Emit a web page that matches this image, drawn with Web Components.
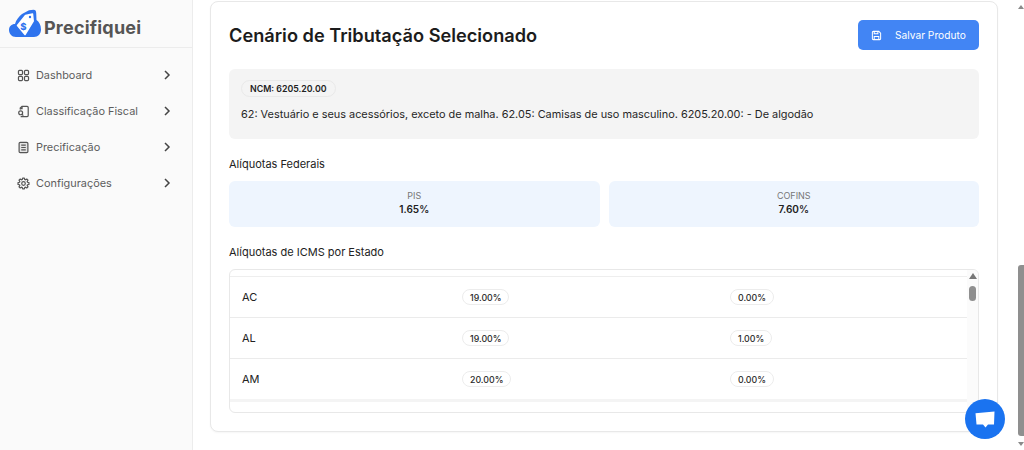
<!DOCTYPE html>
<html lang="pt-BR">
<head>
<meta charset="utf-8">
<title>Precifiquei</title>
<style>
    html, body { margin: 0; height: 100%; background: #fff; overflow: hidden; }
    body { font-family: Inter, "Open Sans", sans-serif; color: #1f1f1f; }
</style>
</head>
<body>
<app-shell>
    <side-bar slot="side">
        <nav-item label="Dashboard" icon="grid"></nav-item>
        <nav-item label="Classificação Fiscal" icon="doc"></nav-item>
        <nav-item label="Precificação" icon="list"></nav-item>
        <nav-item label="Configurações" icon="gear"></nav-item>
    </side-bar>
    <scenario-card>
        <ncm-box code="NCM: 6205.20.00">62: Vestuário e seus acessórios, exceto de malha. 62.05: Camisas de uso masculino. 6205.20.00: - De algodão</ncm-box>
        <section-label>Alíquotas Federais</section-label>
        <rate-tiles>
            <rate-tile name="PIS" value="1.65%"></rate-tile>
            <rate-tile name="COFINS" value="7.60%"></rate-tile>
        </rate-tiles>
        <section-label class="icms">Alíquotas de ICMS por Estado</section-label>
        <icms-table>
            <icms-row uf="AC" a="19.00%" b="0.00%"></icms-row>
            <icms-row uf="AL" a="19.00%" b="1.00%"></icms-row>
            <icms-row uf="AM" a="20.00%" b="0.00%"></icms-row>
        </icms-table>
    </scenario-card>
</app-shell>
<chat-button></chat-button>

<script>
// 8 tooth cog outline around the middle of a 16x16 box
function cogPath() {
    const pts = [];
    for (let i = 0; i < 8; i++) {
        const a = i * Math.PI / 4;
        [[-0.3, 5.1], [-0.16, 6.8], [0.16, 6.8], [0.3, 5.1]].forEach(([d, r]) => {
            pts.push((8 + r * Math.cos(a + d)).toFixed(2) + ' ' + (8 + r * Math.sin(a + d)).toFixed(2));
        });
    }
    return 'M' + pts.join('L') + 'Z';
}

const ICONS = {
    grid: '<rect x="1.800" y="1.800" width="5" height="5" rx="1.200"/><rect x="9.200" y="1.800" width="5" height="5" rx="1.200"/><rect x="1.800" y="9.200" width="5" height="5" rx="1.200"/><rect x="9.200" y="9.200" width="5" height="5" rx="1.200"/>',
    doc: '<path d="M4 5.500V3.800L6.200 1.800H12.500A1.300 1.300 0 0 1 13.800 3.100V12.900A1.300 1.300 0 0 1 12.500 14.200H4.500"/><path d="M6.200 1.800V4.400H4"/><circle cx="4.500" cy="9.600" r="2.400"/><path d="M6.200 11.400 7.800 13"/>',
    list: '<rect x="2.600" y="1.600" width="10.800" height="12.800" rx="1.400" fill="#e4e4e4"/><path d="M5.200 5h5.600M5.200 8h5.600M5.200 11h5.600"/>',
    gear: '<path d="' + cogPath() + '" stroke-linejoin="round"/><circle cx="8" cy="8" r="2.200"/>'
};

class AppShell extends HTMLElement {
    constructor() {
        super();
        this.attachShadow({ mode: 'open' });
        this.shadowRoot.innerHTML = `
            <style>
                :host { display: flex; height: 450px; width: 1024px; }
                .main { flex: 1; min-width: 0; padding: 1px 18px 0 17px; box-sizing: border-box; }
                .bar { width: 8px; flex: none; display: flex; flex-direction: column; }
                .up, .down { width: 0; height: 0; margin-left: 2px; border-left: 3px solid transparent; border-right: 3px solid transparent; }
                .up { border-bottom: 4px solid #8a8a8a; margin-top: 5px; }
                .down { border-top: 4px solid #8a8a8a; margin-top: 6px; }
                .thumb { width: 6px; height: 171px; margin: 256px 0 0 2px; background: #8f8f8f; border-radius: 3px 0 0 3px; }
            </style>
            <slot name="side"></slot>
            <div class="main"><slot></slot></div>
            <div class="bar"><div class="up"></div><div class="thumb"></div><div class="down"></div></div>
        `;
    }
}

class SideBar extends HTMLElement {
    constructor() {
        super();
        this.attachShadow({ mode: 'open' });
        this.shadowRoot.innerHTML = `
            <style>
                :host {
                    display: block; width: 193px; flex: none; box-sizing: border-box;
                    background: #fafafa; border-right: 1px solid #ececec;
                }
                .brand {
                    height: 48px; box-sizing: border-box; border-bottom: 1px solid #ececec;
                    display: flex; align-items: flex-end; gap: 3px; padding: 0 0 9px 8px;
                }
                .brand span { font-size: 18px; line-height: 20px; font-weight: 700; color: #555; letter-spacing: .2px; }
                svg { display: block; flex: none; }
                nav { padding-top: 9px; display: flex; flex-direction: column; }
            </style>
            <div class="brand">
                <svg width="33" height="28" viewBox="0 0 33 28" style="margin-bottom:1px">
                    <path fill="#2f74ee" d="M8 28C3.500 28 1 24.500 1 21 1 17.500 3.500 15 7 15 8 11 11 7.500 14 5L21 1.200 25.500.8C27.500.8 28 2 28.200 4L28.500 11C31 12.500 33 16 33 20.500 33 25 30 28 26 28Z"/>
                    <path fill="#fff" d="M9.500 16.500 17.500 6.500 24.500 5 25.200 12 17 25.500Z" stroke="#fff" stroke-width="1.500" stroke-linejoin="round"/>
                    <circle cx="22" cy="8" r="1.200" fill="#2f74ee"/>
                    <text x="15.500" y="21" font-family="Inter, sans-serif" font-size="9.500" font-weight="800" fill="#2f74ee" text-anchor="middle">$</text>
                </svg>
                <span>Precifiquei</span>
            </div>
            <nav><slot></slot></nav>
        `;
    }
}

class NavItem extends HTMLElement {
    constructor() {
        super();
        this.attachShadow({ mode: 'open' });
    }
    connectedCallback() {
        const icon = ICONS[this.getAttribute('icon')] || '';
        this.shadowRoot.innerHTML = `
            <style>
                :host {
                    display: flex; align-items: center; height: 36px; padding: 0 21px 0 17px;
                    font-size: 10.900px; color: #5d5d5d;
                }
                .ico { fill: none; stroke: #555; stroke-width: 1.500; margin-right: 6px; flex: none; }
                .label { flex: 1; white-space: nowrap; }
                .chev { fill: none; stroke: #444; stroke-width: 1.500; flex: none; }
            </style>
            <svg class="ico" width="13" height="13" viewBox="0 0 16 16">${icon}</svg>
            <span class="label">${this.getAttribute('label')}</span>
            <svg class="chev" width="8" height="10" viewBox="0 0 8 10"><path d="M2 1l4 4-4 4"/></svg>
        `;
    }
}

class ScenarioCard extends HTMLElement {
    constructor() {
        super();
        this.attachShadow({ mode: 'open' });
        this.shadowRoot.innerHTML = `
            <style>
                :host {
                    display: block; box-sizing: border-box; height: 431px; padding: 18px 18px 0;
                    background: #fff; border: 1px solid #e8e8e8; border-radius: 8px;
                    box-shadow: 0 1px 2px rgba(0,0,0,.04);
                }
                .head { display: flex; justify-content: space-between; align-items: center; height: 30px; margin-bottom: 19px; }
                h2 { margin: 0 0 1px; font-size: 18.200px; font-weight: 600; color: #1c1c1c; }
                button {
                    display: flex; align-items: center; width: 121px; height: 30px; padding: 0 0 0 13px;
                    background: #4285f4; border: 0; border-radius: 5px; color: #fff;
                    font: 400 10.200px Inter, sans-serif; box-sizing: border-box; white-space: nowrap;
                }
                button svg { fill: none; stroke: #fff; stroke-width: 1.100; margin-right: 13px; flex: none; }
            </style>
            <div class="head">
                <h2>Cenário de Tributação Selecionado</h2>
                <button>
                    <svg width="11" height="11" viewBox="0 0 12 12"><path d="M1.500 2.500a1 1 0 0 1 1-1h6l2 2v6a1 1 0 0 1-1 1h-7a1 1 0 0 1-1-1z"/><path d="M3.500 1.500v2.500h4v-2.500M3.500 10.500V7h5v3.500"/></svg>
                    Salvar Produto
                </button>
            </div>
            <slot></slot>
        `;
    }
}

class NcmBox extends HTMLElement {
    constructor() {
        super();
        this.attachShadow({ mode: 'open' });
    }
    connectedCallback() {
        this.shadowRoot.innerHTML = `
            <style>
                :host {
                    display: block; box-sizing: border-box; height: 70px; padding: 11px 12px 0;
                    background: #f4f4f4; border-radius: 6px; font-size: 10.900px; color: #262626;
                }
                .tag {
                    display: inline-flex; align-items: center; height: 17px; padding: 0 8px; box-sizing: border-box;
                    border: 1px solid #e9e9e9; border-radius: 9px; font-size: 8.800px; font-weight: 600; color: #222;
                }
                p { margin: 9px 0 0; line-height: 16px; white-space: nowrap; }
            </style>
            <span class="tag">${this.getAttribute('code')}</span>
            <p><slot></slot></p>
        `;
    }
}

class SectionLabel extends HTMLElement {
    constructor() {
        super();
        this.attachShadow({ mode: 'open' });
        this.shadowRoot.innerHTML = `
            <style>
                :host {
                    display: block; margin-top: 17px; height: 16px; line-height: 16px;
                    font-size: 11px; font-weight: 400; color: #222;
                }
            </style>
            <slot></slot>
        `;
    }
}

class RateTiles extends HTMLElement {
    constructor() {
        super();
        this.attachShadow({ mode: 'open' });
        this.shadowRoot.innerHTML = `
            <style>:host { display: grid; grid-template-columns: 1fr 1fr; gap: 9px; margin-top: 9px; }</style>
            <slot></slot>
        `;
    }
}

class RateTile extends HTMLElement {
    constructor() {
        super();
        this.attachShadow({ mode: 'open' });
    }
    connectedCallback() {
        this.shadowRoot.innerHTML = `
            <style>
                :host {
                    display: flex; flex-direction: column; align-items: center; justify-content: center;
                    height: 46px; box-sizing: border-box; padding-bottom: 2px; background: #eef5fe; border-radius: 6px;
                }
                .n { font-size: 9px; line-height: 13px; color: #777; }
                .v { font-size: 10px; line-height: 15px; font-weight: 600; color: #222; }
            </style>
            <span class="n">${this.getAttribute('name')}</span>
            <span class="v">${this.getAttribute('value')}</span>
        `;
    }
}

class IcmsTable extends HTMLElement {
    constructor() {
        super();
        this.attachShadow({ mode: 'open' });
        this.shadowRoot.innerHTML = `
            <style>
                :host {
                    display: flex; box-sizing: border-box; height: 144px; margin-top: 9px;
                    border: 1px solid #e8e8e8; border-radius: 6px; overflow: hidden;
                }
                .rows { flex: 1; min-width: 0; padding-top: 6px; }
                .rows::before { content: ""; display: block; border-top: 1px solid #eee; }
                .rows::after { content: ""; display: block; border-top: 3px solid #f4f4f4; margin-top: -1px; }
                .bar { width: 11px; flex: none; background: #fbfbfb; display: flex; flex-direction: column; align-items: center; }
                .up { width: 0; height: 0; margin-top: 3px; border-left: 4px solid transparent; border-right: 4px solid transparent; border-bottom: 6px solid #777; }
                .thumb { width: 7px; height: 15px; margin-top: 7px; background: #8f8f8f; border-radius: 4px; }
            </style>
            <div class="rows"><slot></slot></div>
            <div class="bar"><div class="up"></div><div class="thumb"></div></div>
        `;
    }
}

class IcmsRow extends HTMLElement {
    constructor() {
        super();
        this.attachShadow({ mode: 'open' });
    }
    connectedCallback() {
        this.shadowRoot.innerHTML = `
            <style>
                :host {
                    display: grid; grid-template-columns: 220px 268px 1fr; align-items: center;
                    height: 41px; box-sizing: border-box; padding-left: 12px;
                    border-bottom: 1px solid #ebebeb; font-size: 11px; font-weight: 400; color: #222;
                }
                .pill {
                    justify-self: start; display: inline-flex; align-items: center; height: 16px; box-sizing: border-box;
                    padding: 0 7px; border: 1px solid #ececec; border-radius: 8px;
                    font-size: 8.800px; font-weight: 500; color: #2a2a2a;
                }
            </style>
            <span>${this.getAttribute('uf')}</span>
            <span class="pill">${this.getAttribute('a')}</span>
            <span class="pill">${this.getAttribute('b')}</span>
        `;
    }
}

class ChatButton extends HTMLElement {
    constructor() {
        super();
        this.attachShadow({ mode: 'open' });
        this.shadowRoot.innerHTML = `
            <style>
                :host {
                    position: fixed; left: 965px; top: 399px; width: 40px; height: 40px; border-radius: 50%;
                    background: #1a73f0; display: flex; align-items: center; justify-content: center;
                }
            </style>
            <svg width="20" height="17" viewBox="0 0 20 17"><path fill="#fff" d="M.5 2.200 19.500.5 19 13.500H13L10.500 16.500 8 13.500H1.500z"/></svg>
        `;
    }
}

customElements.define('app-shell', AppShell);
customElements.define('side-bar', SideBar);
customElements.define('nav-item', NavItem);
customElements.define('scenario-card', ScenarioCard);
customElements.define('ncm-box', NcmBox);
customElements.define('section-label', SectionLabel);
customElements.define('rate-tiles', RateTiles);
customElements.define('rate-tile', RateTile);
customElements.define('icms-table', IcmsTable);
customElements.define('icms-row', IcmsRow);
customElements.define('chat-button', ChatButton);
</script>
</body>
</html>
